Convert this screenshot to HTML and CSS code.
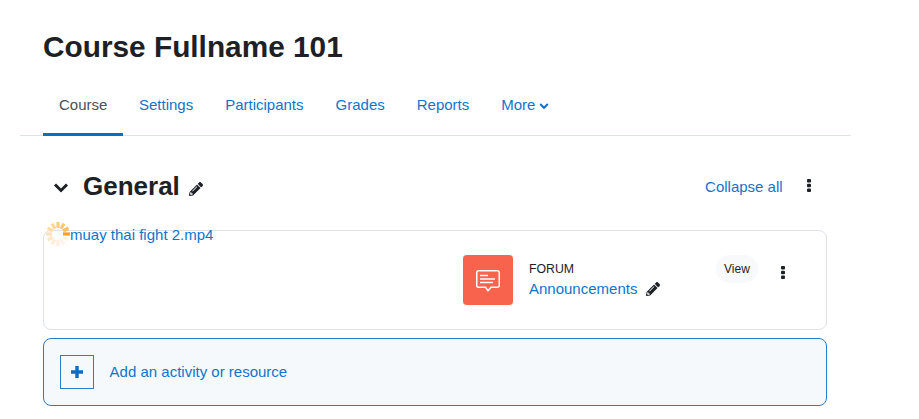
FILE: index.html
```html
<!DOCTYPE html>
<html lang="en">
<head>
<meta charset="utf-8">
<title>Course Fullname 101</title>
<link rel="stylesheet" href="styles.css">
</head>
<body>
<div class="page">
  <h1 class="title">Course Fullname 101</h1>
  <nav class="tabs">
    <a class="tab active">Course</a>
    <a class="tab">Settings</a>
    <a class="tab">Participants</a>
    <a class="tab">Grades</a>
    <a class="tab">Reports</a>
    <a class="tab">More
      <svg class="more-caret" viewBox="0 0 10 8" width="10" height="8"><path d="M1.2 2 5 5.8 8.8 2" fill="none" stroke="currentColor" stroke-width="2"/></svg>
    </a>
  </nav>
  <main class="content">
    <div class="section-head">
      <svg class="section-chevron" viewBox="0 0 16 12" width="16" height="12"><path d="M2 2.500 8 8.500 14 2.500" fill="none" stroke="currentColor" stroke-width="3"/></svg>
      <h2 class="section-title">General</h2>
      <svg class="pencil" viewBox="0 0 512 512" width="14" height="14"><path d="M497.9 142.1l-46.1 46.1c-4.7 4.7-12.3 4.7-17 0l-111-111c-4.7-4.7-4.7-12.3 0-17l46.1-46.1c18.7-18.7 49.1-18.7 67.9 0l60.1 60.1c18.8 18.7 18.8 49.1 0 67.9zM284.2 99.8L21.6 362.4.4 483.9c-2.9 16.4 11.4 30.6 27.8 27.8l121.5-21.3 262.6-262.6c4.7-4.7 4.7-12.3 0-17l-111-111c-4.8-4.7-12.4-4.7-17.1 0zM124.1 339.9c-5.5-5.5-5.5-14.3 0-19.8l154-154c5.5-5.5 14.3-5.5 19.8 0s5.5 14.3 0 19.8l-154 154c-5.5 5.5-14.3 5.5-19.8 0zM88 424h48v36.300l-64.500 11.300-31.100-31.100L51.700 376H88v48z" fill="currentColor"/></svg>
      <a class="collapse">Collapse all</a>
      <svg class="kebab head-kebab" viewBox="0 0 4 13" width="4" height="13"><rect y="0" width="4" height="3.400" rx="1"/><rect y="4.800" width="4" height="3.400" rx="1"/><rect y="9.600" width="4" height="3.400" rx="1"/></svg>
    </div>
    <div class="card">
      <svg class="spinner" viewBox="0 0 24 24" width="24" height="24">
        <g stroke-width="3.200">
          <path d="M17 12h7" stroke="#f9a11b"/>
          <path d="M18 12h6" stroke="#fcc063" transform="rotate(-30 12 12)"/>
          <path d="M18 12h6" stroke="#fcc873" transform="rotate(-60 12 12)"/>
          <path d="M18 12h6" stroke="#fdcf85" transform="rotate(-90 12 12)"/>
          <path d="M18 12h6" stroke="#fdd596" transform="rotate(-120 12 12)"/>
          <path d="M18 12h6" stroke="#fddca8" transform="rotate(-150 12 12)"/>
          <path d="M18 12h6" stroke="#fee2ba" transform="rotate(180 12 12)"/>
          <path d="M18 12h6" stroke="#fee7c9" transform="rotate(150 12 12)"/>
          <path d="M18 12h6" stroke="#feecd6" transform="rotate(120 12 12)"/>
          <path d="M18 12h6" stroke="#fef0e0" transform="rotate(90 12 12)"/>
          <path d="M18 12h6" stroke="#fef3e8" transform="rotate(60 12 12)"/>
          <path d="M18 12h6" stroke="#fef6ee" transform="rotate(30 12 12)"/>
        </g>
      </svg>
      <a class="upload-name">muay thai fight 2.mp4</a>
      <div class="activity">
        <div class="activity-icon">
          <svg viewBox="0 0 24 24" width="24" height="24" fill="none" stroke="#fff" stroke-width="1.500"><path d="M2.500 2.750h19a1.750 1.750 0 0 1 1.750 1.750v13a1.750 1.750 0 0 1-1.750 1.750h-6.500L12 22.800l-2.500-3.550H2.500A1.750 1.750 0 0 1 .75 17.500v-13A1.750 1.750 0 0 1 2.500 2.750z"/><path d="M4 7.500h8M4 11h15M4 14.500h13"/></svg>
        </div>
        <div class="activity-text">
          <div class="activity-type">FORUM</div>
          <div class="activity-name">
            <a>Announcements</a>
            <svg class="pencil" viewBox="0 0 512 512" width="14" height="14"><path d="M497.9 142.1l-46.1 46.1c-4.7 4.7-12.3 4.7-17 0l-111-111c-4.7-4.7-4.7-12.3 0-17l46.1-46.1c18.7-18.7 49.1-18.7 67.9 0l60.1 60.1c18.8 18.7 18.8 49.1 0 67.9zM284.2 99.8L21.6 362.4.4 483.9c-2.9 16.4 11.4 30.6 27.8 27.8l121.5-21.3 262.6-262.6c4.7-4.7 4.7-12.3 0-17l-111-111c-4.8-4.7-12.4-4.7-17.1 0zM124.1 339.9c-5.5-5.5-5.5-14.3 0-19.8l154-154c5.5-5.5 14.3-5.5 19.8 0s5.5 14.3 0 19.8l-154 154c-5.5 5.5-14.3 5.5-19.8 0zM88 424h48v36.300l-64.500 11.300-31.100-31.100L51.700 376H88v48z" fill="currentColor"/></svg>
          </div>
        </div>
        <div class="activity-actions">
          <span class="view-btn">View</span>
          <svg class="kebab" viewBox="0 0 4 13" width="4" height="13"><rect y="0" width="4" height="3.400" rx="1"/><rect y="4.800" width="4" height="3.400" rx="1"/><rect y="9.600" width="4" height="3.400" rx="1"/></svg>
        </div>
      </div>
    </div>
    <a class="add-activity">
      <span class="add-box"><svg viewBox="0 0 14 14" width="12" height="12"><path d="M7 0v14M0 7h14" stroke="currentColor" stroke-width="4" fill="none"/></svg></span>
      <span class="add-label">Add an activity or resource</span>
    </a>
  </main>
</div>
</body>
</html>
```
FILE: styles.css
```css
* { box-sizing: border-box; }
html, body { margin: 0; padding: 0; background: #fff; }
body {
  font-family: "Liberation Sans", Arial, sans-serif;
  font-size: 15px;
  color: #1d2125;
  height: 419px;
  overflow: hidden;
}
a { color: #1174cc; text-decoration: none; }
.page { width: 831px; margin-left: 20px; }
.title {
  margin: 0;
  padding: 29px 0 0 23px;
  font-size: 29.800px;
  line-height: 36px;
  font-weight: 700;
}
.tabs {
  display: flex;
  margin-top: 4px;
  padding-left: 23px;
  height: 67px;
  border-bottom: 1px solid #dee2e6;
}
.tab {
  display: flex;
  align-items: center;
  padding: 8px 16px 0;
  height: 67px;
  border-bottom: 3px solid transparent;
  margin-bottom: -1px;
  line-height: 20px;
}
.tab.active { color: #495057; border-bottom-color: #0f6cbf; padding-right: 15.600px; }
.more-caret { margin-left: 4px; margin-top: 1px; }
.content { padding: 0 24px 0 23px; }
.section-head {
  display: flex;
  align-items: center;
  height: 30px;
  margin-top: 36px;
}
.section-chevron { margin-left: 10px; color: #1d2125; margin-top: 2px; }
.section-title {
  margin: 0 0 2px 14px;
  font-size: 26px;
  line-height: 30px;
  font-weight: 700;
}
.section-head .pencil { margin-left: 9px; margin-top: 3px; }
.pencil { color: #1d2125; flex: none; }
.collapse { margin: 0 24.400px 2px auto; }
.head-kebab { margin-right: 16px; margin-top: -3px; }
.kebab { fill: #1d2125; flex: none; }
.card {
  position: relative;
  height: 100px;
  margin-top: 28px;
  border: 1px solid #dee2e6;
  border-radius: 8px;
  padding: 24px 0 0 419px;
}
.spinner { position: absolute; left: 2px; top: -9px; }
.upload-name { position: absolute; left: 26px; top: -4px; line-height: 16px; }
.activity { display: flex; align-items: flex-start; }
.activity-icon {
  width: 50px;
  height: 50px;
  background: #f7634d;
  border-radius: 4px;
  display: flex;
  align-items: center;
  justify-content: center;
  flex: none;
}
.activity-text { margin-left: 16px; width: 187px; }
.activity-type { font-size: 12.300px; line-height: 14px; margin-top: 7px; }
.activity-name { display: flex; align-items: center; margin-top: 3px; line-height: 20px; }
.activity-name .pencil { margin-left: 9px; }
.activity-actions { display: flex; align-items: center; }
.view-btn {
  font-size: 12px;
  line-height: 14px;
  padding: 7px 8px;
  background: #f8f9fa;
  border-radius: 14px;
}
.activity-actions .kebab { margin-left: 23.500px; margin-top: 7px; }
.add-activity {
  display: flex;
  align-items: center;
  height: 68px;
  margin-top: 8px;
  padding-left: 16px;
  border: 1px solid #2b7dc6;
  border-radius: 8px;
  background: #f5f9fc;
}
.add-box {
  width: 34px;
  height: 34px;
  border: 1px solid #2b7dc6;
  color: #0f6cbf;
  display: flex;
  align-items: center;
  justify-content: center;
  margin-right: 15.600px;
}
.add-label { margin-bottom: 2px; }
```
